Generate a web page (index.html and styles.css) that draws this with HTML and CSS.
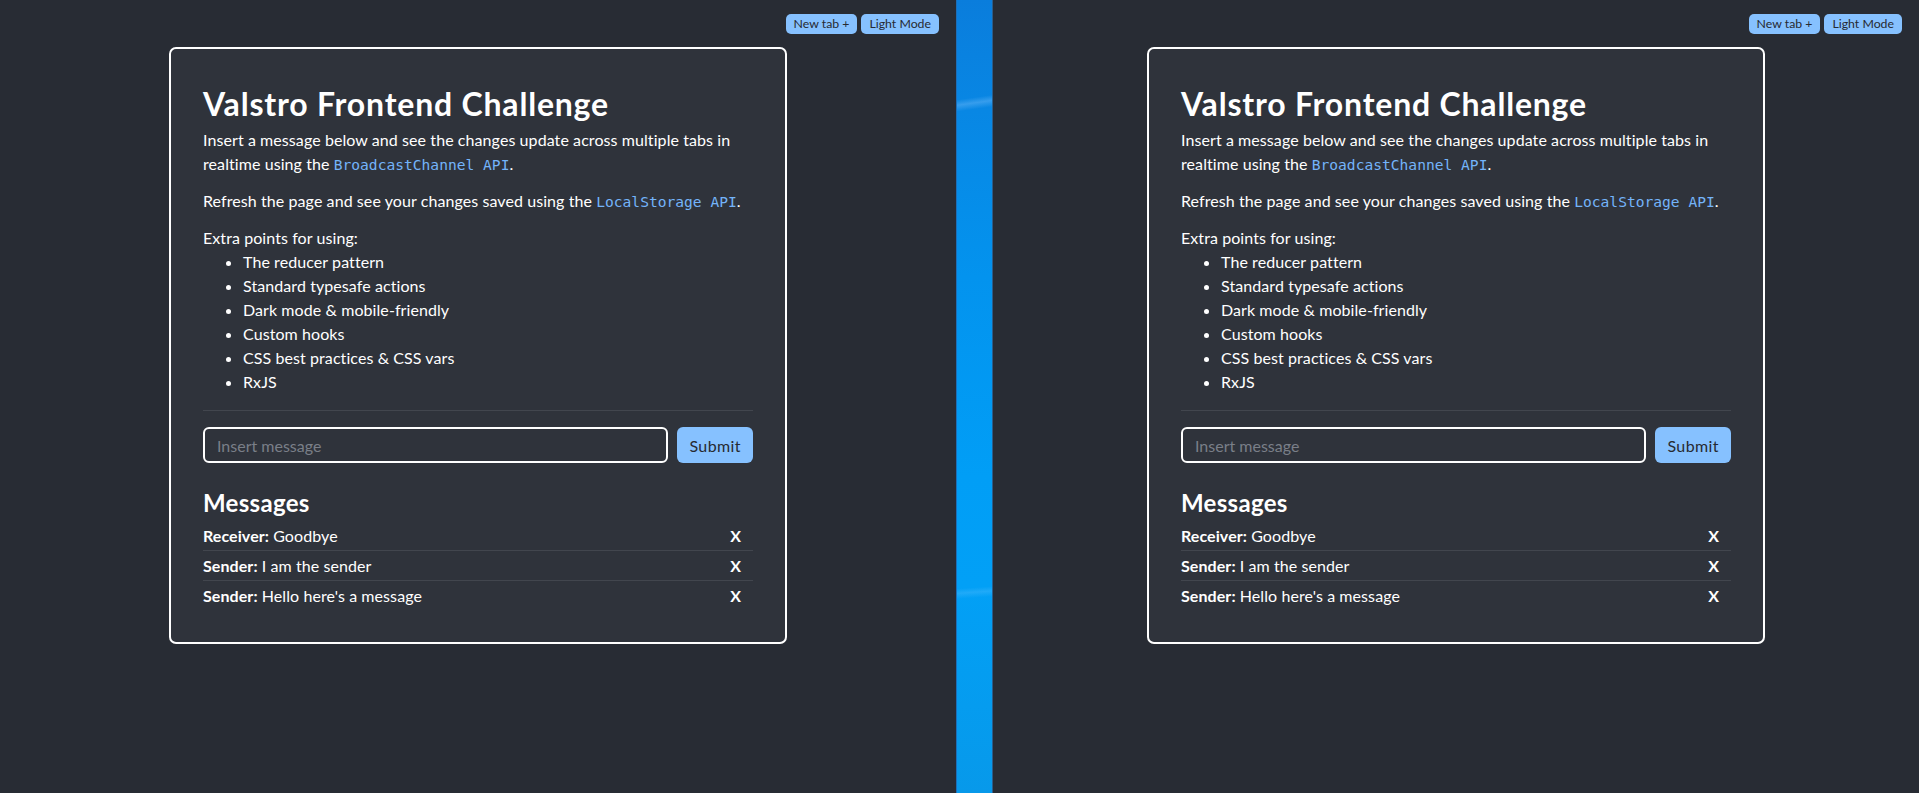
FILE: index.html
```html
<!DOCTYPE html>
<html lang="en">
<head>
<meta charset="utf-8">
<title>Valstro Frontend Challenge</title>
<link rel="stylesheet" href="styles.css">
</head>
<body>
<div class="screen">
  <div class="window window-left">
    <div class="topbar">
      <button class="top-btn">New tab +</button>
      <button class="top-btn">Light Mode</button>
    </div>
    <main class="card">
      <h1 class="title">Valstro Frontend Challenge</h1>
      <p class="text">Insert a message below and see the changes update across multiple tabs in realtime using the <code class="code">BroadcastChannel API</code>.</p>
      <p class="text">Refresh the page and see your changes saved using the <code class="code">LocalStorage API</code>.</p>
      <div class="text extra">
        <div>Extra points for using:</div>
        <ul class="points">
          <li>The reducer pattern</li>
          <li>Standard typesafe actions</li>
          <li>Dark mode &amp; mobile-friendly</li>
          <li>Custom hooks</li>
          <li>CSS best practices &amp; CSS vars</li>
          <li>RxJS</li>
        </ul>
      </div>
      <hr class="divider">
      <form class="msg-form">
        <input class="msg-input" type="text" placeholder="Insert message">
        <button class="submit" type="button">Submit</button>
      </form>
      <h2 class="messages-title">Messages</h2>
      <ul class="messages">
        <li class="message"><span><b>Receiver:</b> Goodbye</span><button class="remove">X</button></li>
        <li class="message"><span><b>Sender:</b> I am the sender</span><button class="remove">X</button></li>
        <li class="message"><span><b>Sender:</b> Hello here's a message</span><button class="remove">X</button></li>
      </ul>
    </main>
  </div>
  <div class="desktop"></div>
  <div class="window window-right">
    <div class="topbar">
      <button class="top-btn">New tab +</button>
      <button class="top-btn">Light Mode</button>
    </div>
    <main class="card">
      <h1 class="title">Valstro Frontend Challenge</h1>
      <p class="text">Insert a message below and see the changes update across multiple tabs in realtime using the <code class="code">BroadcastChannel API</code>.</p>
      <p class="text">Refresh the page and see your changes saved using the <code class="code">LocalStorage API</code>.</p>
      <div class="text extra">
        <div>Extra points for using:</div>
        <ul class="points">
          <li>The reducer pattern</li>
          <li>Standard typesafe actions</li>
          <li>Dark mode &amp; mobile-friendly</li>
          <li>Custom hooks</li>
          <li>CSS best practices &amp; CSS vars</li>
          <li>RxJS</li>
        </ul>
      </div>
      <hr class="divider">
      <form class="msg-form">
        <input class="msg-input" type="text" placeholder="Insert message">
        <button class="submit" type="button">Submit</button>
      </form>
      <h2 class="messages-title">Messages</h2>
      <ul class="messages">
        <li class="message"><span><b>Receiver:</b> Goodbye</span><button class="remove">X</button></li>
        <li class="message"><span><b>Sender:</b> I am the sender</span><button class="remove">X</button></li>
        <li class="message"><span><b>Sender:</b> Hello here's a message</span><button class="remove">X</button></li>
      </ul>
    </main>
  </div>
</div>
</body>
</html>
```
FILE: styles.css
```css
:root {
  --bg: #282c34;
  --card-bg: #2f333b;
  --text: #ffffff;
  --accent: #86c1ff;
  --code: #74b4fa;
  --line: #42464e;
  --btn-text: #262a31;
}

* { box-sizing: border-box; }

html, body {
  margin: 0;
  height: 100%;
}

body {
  font-family: Lato, "Noto Sans", sans-serif;
  color: var(--text);
  background: var(--bg);
  overflow: hidden;
}

.screen {
  display: flex;
  height: 100vh;
}

.window {
  background: var(--bg);
  height: 100%;
}

.window-left { width: 956px; flex: none; }
.window-right { flex: 1; }

.desktop {
  width: 37px;
  flex: none;
  border-left: 1px solid #1c6fb9;
  border-right: 1px solid #2a5e8c;
  background:
    linear-gradient(172deg, transparent 12.5%, rgba(140, 200, 255, 0.35) 13.2%, transparent 14%),
    linear-gradient(176deg, transparent 74%, rgba(120, 200, 255, 0.25) 74.6%, transparent 75.3%),
    linear-gradient(180deg, #0a7ddc 0%, #0887e4 14%, #0393ee 35%, #019ef6 60%, #02a0f6 74%, #0799ea 100%);
}

.topbar {
  display: flex;
  justify-content: flex-end;
  gap: 4px;
  padding: 14px 17px 0 0;
}

.top-btn {
  height: 20px;
  padding: 0 8px;
  border: none;
  border-radius: 5px;
  background: var(--accent);
  color: var(--btn-text);
  font-family: Lato, sans-serif;
  font-size: 12.3px;
  line-height: 20px;
}

.card {
  display: block;
  width: 618px;
  margin: 13px auto 0;
  padding: 32px;
  border: 2px solid #ffffff;
  border-radius: 7px;
  background: var(--card-bg);
}

.title {
  margin: 0 0 2px;
  font-size: 32px;
  line-height: 45px;
  font-weight: 700;
  letter-spacing: 0.8px;
}

.text {
  margin: 0 0 13px;
  font-size: 16px;
  line-height: 24px;
  letter-spacing: 0.08px;
}

.extra { margin-bottom: 0; }

.code {
  font-family: "DejaVu Sans Mono", "Liberation Mono", monospace;
  font-size: 14.6px;
  line-height: 16px;
  letter-spacing: 0;
  color: var(--code);
}

.points {
  margin: 0;
  padding-left: 40px;
}

.divider {
  margin: 16px 0 16px;
  border: none;
  border-top: 1px solid var(--line);
}

.msg-form {
  display: flex;
  gap: 9px;
  margin: 0;
}

.msg-input {
  flex: 1;
  height: 36px;
  padding: 0 12px;
  border: 2px solid #ffffff;
  border-radius: 6px;
  background: transparent;
  color: var(--text);
  font-family: Lato, sans-serif;
  font-size: 16px;
  outline: none;
}

.msg-input::placeholder { color: #7a7f88; }

.submit {
  height: 36px;
  padding: 0 12px;
  border: none;
  border-radius: 6px;
  background: var(--accent);
  color: var(--btn-text);
  font-family: Lato, sans-serif;
  font-size: 16px;
  letter-spacing: 0.4px;
}

.messages-title {
  margin: 25px 0 4px;
  font-size: 24px;
  line-height: 29px;
  font-weight: 700;
  letter-spacing: 0.3px;
}

.messages {
  list-style: none;
  margin: 0;
  padding: 0;
}

.message {
  display: flex;
  justify-content: space-between;
  align-items: center;
  padding: 3px 0 2px;
  border-bottom: 1px solid var(--line);
  font-size: 16px;
  line-height: 24px;
  letter-spacing: 0.08px;
}

.message:last-child { border-bottom: none; }

.remove {
  padding: 0 12px;
  border: none;
  background: transparent;
  color: var(--text);
  font-family: Lato, sans-serif;
  font-size: 16px;
  font-weight: 700;
  line-height: 24px;
}
```
